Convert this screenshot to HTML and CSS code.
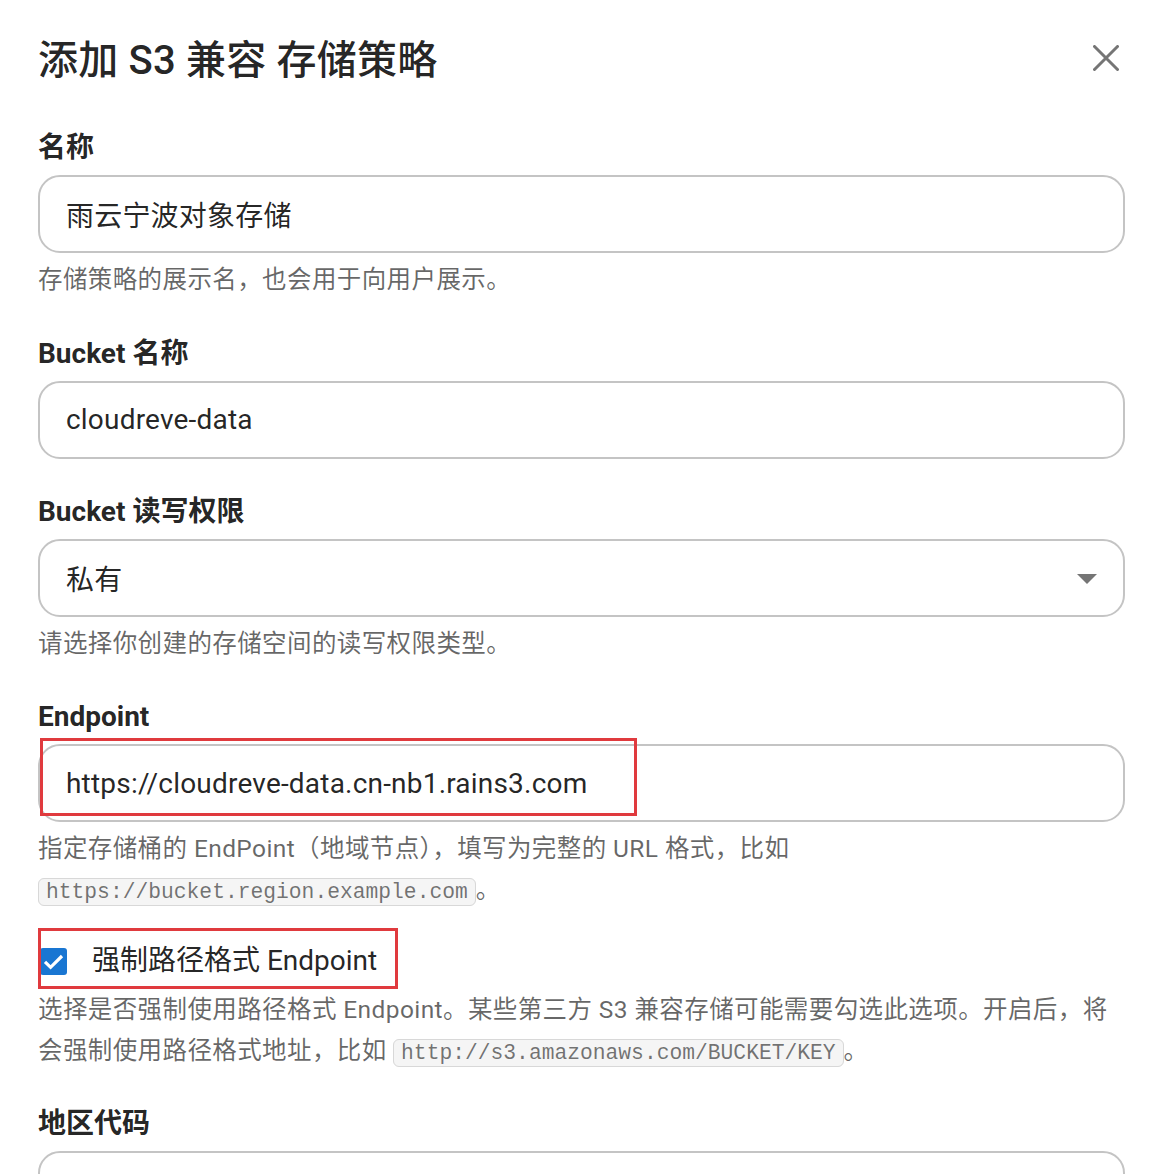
FILE: index.html
```html
<!DOCTYPE html>
<html lang="zh-CN">
<head>
<meta charset="utf-8">
<title>添加 S3 兼容 存储策略</title>
<link rel="stylesheet" href="styles.css">
</head>
<body>
<div class="dialog">
  <div class="header">
    <h2 class="title">添加 S3 兼容 存储策略</h2>
    <button class="close" aria-label="关闭">
      <svg width="26" height="26" viewBox="0 0 26 26"><path d="M1.5 1.5 L24.5 24.5 M24.5 1.5 L1.5 24.5" stroke="#757575" stroke-width="3" stroke-linecap="round"/></svg>
    </button>
  </div>

  <div class="field">
    <div class="label">名称</div>
    <div class="input"><span>雨云宁波对象存储</span></div>
    <div class="helper">存储策略的展示名，也会用于向用户展示。</div>
  </div>

  <div class="field">
    <div class="label">Bucket 名称</div>
    <div class="input"><span>cloudreve-data</span></div>
  </div>

  <div class="field">
    <div class="label">Bucket 读写权限</div>
    <div class="input select"><span>私有</span><span class="arrow"></span></div>
    <div class="helper">请选择你创建的存储空间的读写权限类型。</div>
  </div>

  <div class="field field-tight">
    <div class="label">Endpoint</div>
    <div class="input"><span>https://cloudreve-data.cn-nb1.rains3.com</span><span class="mark mark-endpoint"></span></div>
    <div class="helper">指定存储桶的 EndPoint（地域节点），填写为完整的 URL 格式，比如 <code>https://bucket.region.example.com</code>。</div>
  </div>

  <div class="field field-check">
    <label class="check-row">
      <span class="checkbox"><svg width="27" height="27" viewBox="0 0 27 27"><path d="M5 13.8 L10.6 19.3 L22 8" fill="none" stroke="#fff" stroke-width="3.2"/></svg></span>
      <span class="check-label">强制路径格式 Endpoint</span>
      <span class="mark mark-check"></span>
    </label>
    <div class="helper helper-after-check">选择是否强制使用路径格式 Endpoint。某些第三方 S3 兼容存储可能需要勾选此选项。开启后，将会强制使用路径格式地址，比如 <code>http://s3.amazonaws.com/BUCKET/KEY</code>。</div>
  </div>

  <div class="field">
    <div class="label">地区代码</div>
    <div class="input"><span></span></div>
  </div>
</div>
</body>
</html>
```

FILE: styles.css
```css
* { box-sizing: border-box; }
html, body { margin: 0; padding: 0; background: #fff; }
body {
  font-family: Roboto, "Noto Sans CJK SC", sans-serif;
  color: rgba(0,0,0,0.87);
  overflow: hidden;
}
.dialog {
  padding: 35px 42px 0 38px;
  height: 1174px;
  overflow: hidden;
}
.header {
  display: flex;
  align-items: center;
  justify-content: space-between;
  height: 52px;
  margin-bottom: 39px;
}
.title {
  margin: 0;
  font-size: 40px;
  font-weight: 500;
  line-height: 52px;
  letter-spacing: 0.2px;
}
.close {
  border: 0;
  background: none;
  padding: 0;
  margin-right: 6px;
  margin-top: -6px;
  width: 26px;
  height: 26px;
  display: flex;
}
.field {
  display: flex;
  flex-direction: column;
  margin-bottom: 31px;
}
.field-tight { margin-bottom: 16px; }
.field-check { margin-bottom: 29px; }
.label {
  font-size: 28px;
  font-weight: 700;
  line-height: 40px;
  padding-top: 2px;
  margin-bottom: 7px;
}
.input {
  position: relative;
  height: 78px;
  border: 2px solid #c4c4c4;
  border-radius: 22px;
  display: flex;
  align-items: center;
  padding: 0 26px;
  font-size: 28px;
  letter-spacing: 0.2px;
}
.select { justify-content: space-between; padding-right: 26px; }
.arrow {
  width: 0; height: 0;
  border-left: 10px solid transparent;
  border-right: 10px solid transparent;
  border-top: 10px solid #757575;
  margin-top: 2px;
}
.helper {
  margin-top: 7px;
  font-size: 24.5px;
  line-height: 40.5px;
  color: rgba(0,0,0,0.6);
  letter-spacing: 0.4px;
}
code {
  font-family: "Liberation Mono", monospace;
  font-size: 21.3px;
  background: #f5f5f5;
  border: 1.5px solid #d8d8d8;
  border-radius: 6px;
  padding: 1px 7px;
  color: rgba(0,0,0,0.55);
  letter-spacing: 0;
}
.mark {
  position: absolute;
  border: 3px solid #e03a3e;
  pointer-events: none;
}
.mark-endpoint { left: 0; top: -8px; width: 597px; height: 78px; }
.check-row {
  position: relative;
  display: flex;
  align-items: center;
  height: 60px;
  padding-left: 2px;
  padding-top: 6px;
}
.checkbox {
  width: 27px;
  height: 27px;
  border-radius: 3px;
  background: #1976d2;
  display: flex;
}
.check-label {
  margin-left: 25px;
  font-size: 28px;
  line-height: 40px;
}
.mark-check { left: 0; top: 0; width: 360px; height: 61px; }
.helper-after-check { margin-top: 2px; }
```
